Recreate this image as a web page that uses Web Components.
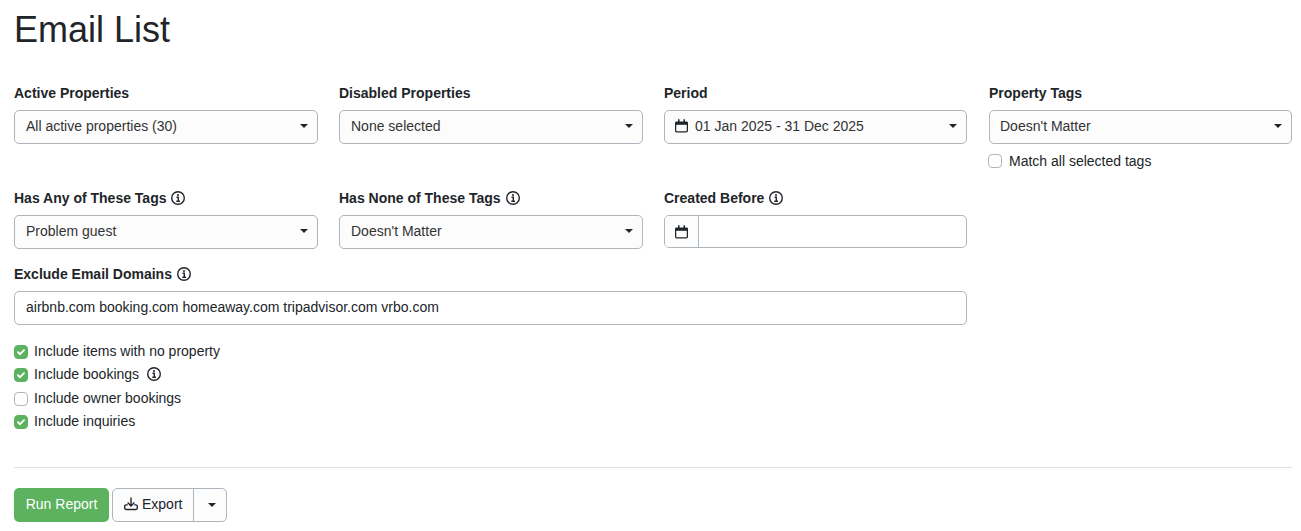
<!DOCTYPE html>
<html>
<head>
<meta charset="utf-8">
<title>Email List</title>
<style>
  html, body { margin: 0; background: #fff; }
  body { font-family: "Liberation Sans", Arial, sans-serif; font-size: 14px; color: #212529; }
</style>
</head>
<body>
<report-page></report-page>

<script>
const CAL = `<svg width="13" height="14" viewBox="0 0 13 14" fill="none" stroke="#212529"><path d="M1.2 3.2h10.6a.6.6 0 0 1 .6.6v8a1 1 0 0 1-1 1H1.6a1 1 0 0 1-1-1v-8a.6.6 0 0 1 .6-.6z" stroke-width="1.3"/><path d="M1 3h11v2.8H1z" fill="#212529" stroke="none"/><path d="M3.8 .8v3M9.2 .8v3" stroke-width="1.5" stroke-linecap="round"/></svg>`;

class InfoIcon extends HTMLElement {
    connectedCallback() {
        this.attachShadow({ mode: 'open' }).innerHTML = `
            <style>
                :host { display: inline-flex; margin-left: 5px; }
                svg { display: block; }
            </style>
            <svg width="14" height="14" viewBox="0 0 14 14" fill="none" stroke="#212529">
                <circle cx="7" cy="7" r="6.3" stroke-width="1.4"/>
                <path d="M5.5 6.2H7.3V10M5.3 10.2H9" stroke-width="1.4"/>
                <circle cx="7" cy="3.9" r="1" fill="#212529" stroke="none"/>
            </svg>`;
    }
}

class FormField extends HTMLElement {
    connectedCallback() {
        const info = this.hasAttribute('info') ? '<info-icon></info-icon>' : '';
        this.attachShadow({ mode: 'open' }).innerHTML = `
            <style>
                :host { display: block; min-width: 0; }
                label { display: flex; align-items: center; height: 17px; margin-bottom: 8.5px; font-weight: 700; }
            </style>
            <label>${this.getAttribute('label')}${info}</label>
            <slot></slot>`;
    }
}

class SelectBox extends HTMLElement {
    connectedCallback() {
        const cal = this.hasAttribute('calendar');
        this.attachShadow({ mode: 'open' }).innerHTML = `
            <style>
                :host { display: flex; align-items: center; box-sizing: border-box; height: 33.6px; padding: 0 9px 1px ${cal ? 10 : 11}px; background: #fcfcfd; border: 1px solid #adb5bd; border-radius: 5px; color: #333; }
                .cal { display: flex; margin-right: 7px; }
                .text { flex: 1; white-space: nowrap; }
                .caret { width: 0; height: 0; border: 4px solid transparent; border-top-color: #212529; border-bottom: 0; }
            </style>
            ${cal ? `<span class="cal">${CAL}</span>` : ''}<span class="text"><slot></slot></span><span class="caret"></span>`;
    }
}

class DateInput extends HTMLElement {
    connectedCallback() {
        this.attachShadow({ mode: 'open' }).innerHTML = `
            <style>
                :host { display: flex; box-sizing: border-box; height: 33px; background: #fff; border: 1px solid #adb5bd; border-radius: 5px; }
                .cal { display: flex; align-items: center; justify-content: center; width: 33px; border-right: 1px solid #adb5bd; background: #fcfcfd; border-radius: 4px 0 0 4px; }
            </style>
            <span class="cal">${CAL}</span>`;
    }
}

class TextInput extends HTMLElement {
    connectedCallback() {
        this.attachShadow({ mode: 'open' }).innerHTML = `
            <style>
                :host { display: flex; align-items: center; box-sizing: border-box; height: 33.6px; padding: 0 11px 1px; background: #fff; border: 1px solid #adb5bd; border-radius: 5px; }
            </style>
            <slot></slot>`;
    }
}

class CheckRow extends HTMLElement {
    connectedCallback() {
        const on = this.hasAttribute('checked');
        this.attachShadow({ mode: 'open' }).innerHTML = `
            <style>
                :host { display: flex; align-items: center; height: 23.5px; }
                .box { box-sizing: border-box; width: 14px; height: 14px; margin: var(--box-nudge, 0) var(--box-gap, 6px) 0 0; border-radius: 4px; border: 1px solid ${on ? '#5cb25e' : '#adb5bd'}; background: ${on ? '#5cb25e' : '#fff'}; display: flex; align-items: center; justify-content: center; }
            </style>
            <span class="box">${on ? '<svg width="10" height="10" viewBox="0 0 10 10" fill="none" stroke="#fff" stroke-width="1.9" stroke-linecap="round" stroke-linejoin="round"><path d="M2 5.2l2.1 2L8 3.2"/></svg>' : ''}</span>
            <slot></slot>`;
    }
}

class ReportPage extends HTMLElement {
    connectedCallback() {
        this.attachShadow({ mode: 'open' }).innerHTML = `
            <style>
                :host { display: block; padding: 0 9px 0 14px; }
                h1 { margin: 0; padding-top: 9px; height: 84.5px; box-sizing: border-box; font-size: 36px; line-height: 42px; font-weight: 400; }
                .grid { display: grid; grid-template-columns: 304px 304px 303px 303px; column-gap: 21px; }
                .r1 { height: 105px; }
                .r2 { height: 76px; }
                .c4 { margin: 0 -1px 0 1px; }
                .c4 select-box { padding-left: 10px; }
                .match { margin: 5.5px 0 0 -1px; --box-gap: 7px; }
                .wide { grid-column: span 3; }
                .checks { margin-top: 14.6px; --box-nudge: 2px; }
                hr { border: 0; border-top: 1px solid #dee2e6; margin: 33.75px 0 20px; }
                .actions { display: flex; }
                .run { display: flex; align-items: center; justify-content: center; box-sizing: border-box; width: 95px; height: 34px; padding-bottom: 1px; background: #5cb25e; color: #fff; border-radius: 5px; margin-right: 3px; }
                .split { display: flex; height: 34px; box-sizing: border-box; background: #fcfcfd; border: 1px solid #adb5bd; border-radius: 5px; }
                .export { display: flex; align-items: center; gap: 4px; padding: 0 11px 1px 11px; border-right: 1px solid #adb5bd; }
                .drop { display: flex; align-items: center; justify-content: center; width: 32px; padding-left: 3px; box-sizing: border-box; }
                .caret { width: 0; height: 0; border: 4px solid transparent; border-top-color: #212529; border-bottom: 0; }
            </style>
            <h1>Email List</h1>
            <div class="grid r1">
                <form-field label="Active Properties"><select-box>All active properties (30)</select-box></form-field>
                <form-field label="Disabled Properties"><select-box>None selected</select-box></form-field>
                <form-field label="Period"><select-box calendar>01 Jan 2025 - 31 Dec 2025</select-box></form-field>
                <form-field class="c4" label="Property Tags"><select-box>Doesn't Matter</select-box><check-row class="match">Match all selected tags</check-row></form-field>
            </div>
            <div class="grid r2">
                <form-field label="Has Any of These Tags" info><select-box>Problem guest</select-box></form-field>
                <form-field label="Has None of These Tags" info><select-box>Doesn't Matter</select-box></form-field>
                <form-field label="Created Before" info><date-input></date-input></form-field>
            </div>
            <div class="grid">
                <form-field class="wide" label="Exclude Email Domains" info><text-input>airbnb.com booking.com homeaway.com tripadvisor.com vrbo.com</text-input></form-field>
            </div>
            <div class="checks">
                <check-row checked>Include items with no property</check-row>
                <check-row checked>Include bookings <info-icon style="margin-left:8px"></info-icon></check-row>
                <check-row>Include owner bookings</check-row>
                <check-row checked>Include inquiries</check-row>
            </div>
            <hr>
            <div class="actions">
                <div class="run">Run Report</div>
                <div class="split">
                    <div class="export">
                        <svg width="14" height="14" viewBox="0 0 14 14" fill="none" stroke="#212529" stroke-width="1.4"><path d="M7 .5v8.5M3.6 5.6L7 9l3.4-3.4"/><path d="M3.8 7.9H2.2A1.5 1.5 0 0 0 .7 9.4v1.6a1.5 1.5 0 0 0 1.5 1.5h9.6a1.5 1.5 0 0 0 1.5-1.5V9.4a1.5 1.5 0 0 0-1.5-1.5h-1.6"/></svg>
                        Export
                    </div>
                    <div class="drop"><span class="caret"></span></div>
                </div>
            </div>`;
    }
}

customElements.define('info-icon', InfoIcon);
customElements.define('form-field', FormField);
customElements.define('select-box', SelectBox);
customElements.define('date-input', DateInput);
customElements.define('text-input', TextInput);
customElements.define('check-row', CheckRow);
customElements.define('report-page', ReportPage);
</script>
</body>
</html>
